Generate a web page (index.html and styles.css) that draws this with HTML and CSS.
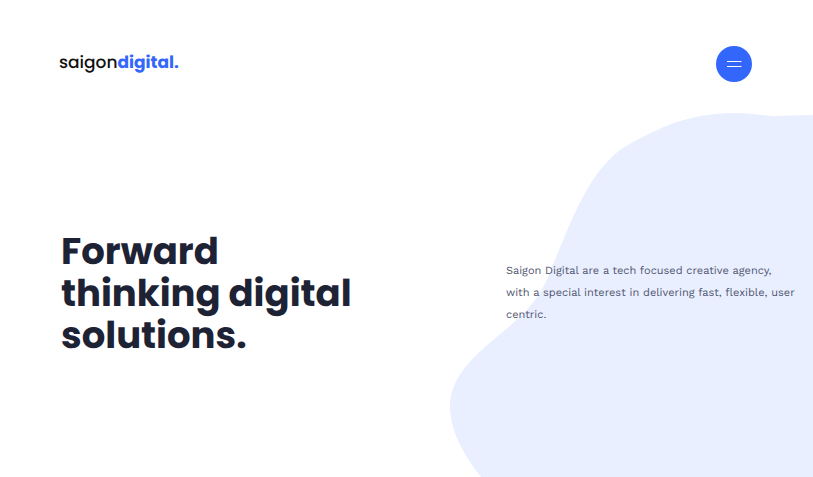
FILE: index.html
```html
<!DOCTYPE html>
<html lang="en">
<head>
  <meta charset="utf-8">
  <meta name="viewport" content="width=device-width, initial-scale=1">
  <title>Saigon Digital</title>
  <link rel="stylesheet" href="styles.css">
</head>
<body>
  <div class="page">
    <svg class="blob" viewBox="0 0 363 364" aria-hidden="true">
      <path d="M31 364C13 341 0 317 0 293C0 256 40 231 63 210C81 194 93 180 102 154C120 112 136 63 170 37C177 32 190 25 203 19C229 6 256 0 285 0C299 0 309 2 323 3C337 3 350 2 363 2V364Z"/>
    </svg>
    <header class="header">
      <a class="logo" href="#">saigon<strong class="logo-accent">digital.</strong></a>
      <button class="menu" type="button" aria-label="Open menu">
        <svg class="menu-icon" viewBox="0 0 16 8" aria-hidden="true">
          <path d="M1 1.5H15.5M1 6.5H15.5"/>
        </svg>
      </button>
    </header>
    <main class="hero">
      <h1 class="title">Forward<br>thinking digital<br>solutions.</h1>
      <p class="intro">Saigon Digital are a tech focused creative agency, with a special interest in delivering fast, flexible, user centric.</p>
    </main>
  </div>
</body>
</html>
```
FILE: styles.css
```css
* {
  box-sizing: border-box;
}

body {
  margin: 0;
  background: #fff;
  color: #1d2335;
  text-rendering: geometricPrecision;
}

.page {
  position: relative;
  min-height: 100vh;
  overflow: hidden;
}

.blob {
  position: absolute;
  right: 0;
  bottom: 0;
  z-index: -1;
  height: auto;
  width: 363px;
  fill: #e9efff;
}

.header {
  display: flex;
  align-items: center;
  justify-content: space-between;
  padding: 46px 61px 0 59px;
}

.logo {
  color: #111;
  font: 500 17px/32px Poppins, Inter, sans-serif;
  padding-bottom: 4px;
  text-decoration: none;
}

.logo-accent {
  color: #3366fa;
  font-weight: 700;
}

.menu {
  display: grid;
  place-items: center;
  width: 36px;
  height: 36px;
  padding: 0;
  border: 0;
  border-radius: 50%;
  background: #3366fa;
  cursor: pointer;
}

.menu-icon {
  width: 16px;
  height: 8px;
  fill: none;
  stroke: #fff;
}

.hero {
  display: grid;
  grid-template-columns: 445px 1fr;
  align-items: center;
  padding: 148px 16px 0 61px;
}

.title {
  margin: 0;
  font: 700 37px/42px Poppins, Inter, sans-serif;
}

.intro {
  margin: 0;
  color: #50556f;
  font: 400 11px/22px "Work Sans", Inter, sans-serif;
}
```
